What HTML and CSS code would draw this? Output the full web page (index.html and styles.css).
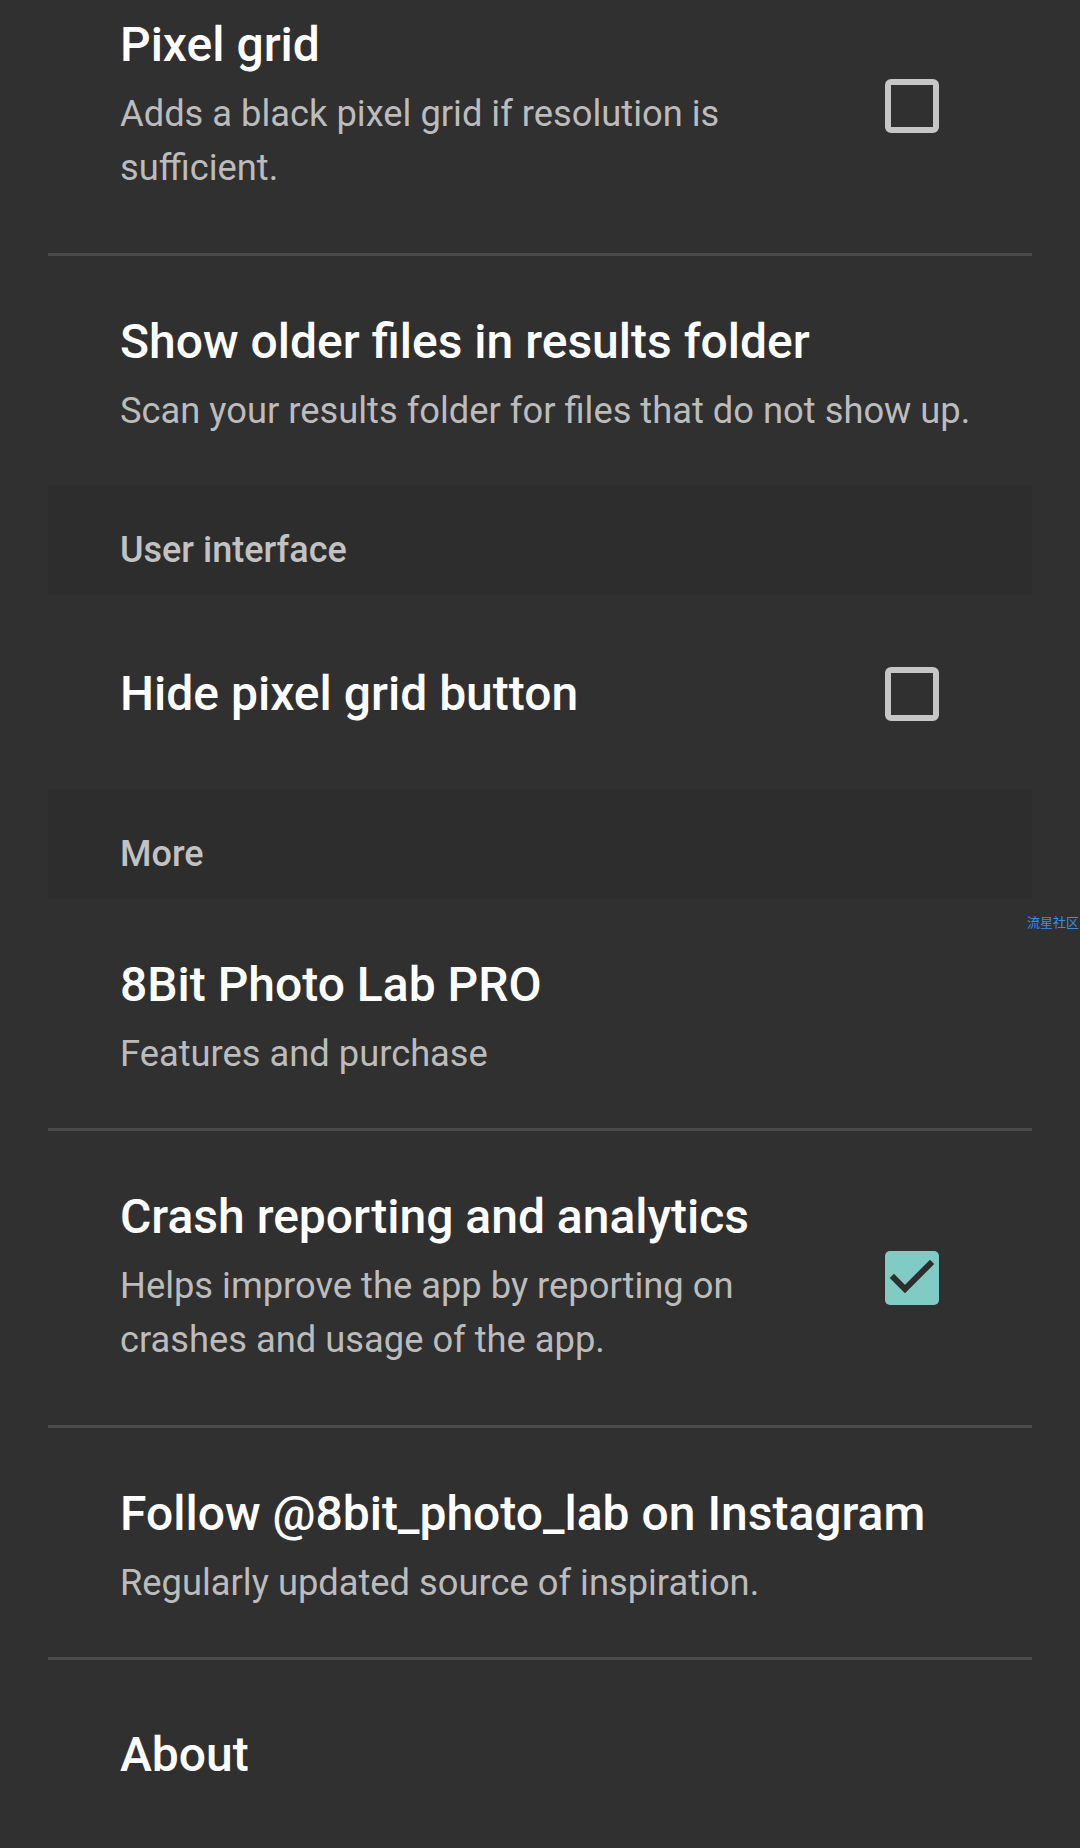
FILE: index.html
```html
<!DOCTYPE html>
<html>
<head>
	<meta charset="UTF-8">
	<title>Settings</title>
	<link rel="stylesheet" href="styles.css">
</head>
<body>
	<div class="settings">
		<!-- scrolled list, first row is partly off screen -->
		<div class="group">
			<div class="pref pref-tall">
				<div class="pref-text">
					<div class="pref-title">Pixel grid</div>
					<div class="pref-summary">Adds a black pixel grid if resolution is sufficient.</div>
				</div>
				<svg class="check" viewBox="0 0 54 54"><rect x="3" y="3" width="48" height="48" rx="3" class="box-off"/></svg>
			</div>
			<div class="pref">
				<div class="pref-text">
					<div class="pref-title">Show older files in results folder</div>
					<div class="pref-summary">Scan your results folder for files that do not show up.</div>
				</div>
			</div>
		</div>

		<div class="category">User interface</div>
		<div class="group">
			<div class="pref pref-single">
				<div class="pref-text">
					<div class="pref-title">Hide pixel grid button</div>
				</div>
				<svg class="check" viewBox="0 0 54 54"><rect x="3" y="3" width="48" height="48" rx="3" class="box-off"/></svg>
			</div>
		</div>

		<div class="category">More</div>
		<div class="group">
			<div class="pref">
				<div class="pref-text">
					<div class="pref-title">8Bit Photo Lab PRO</div>
					<div class="pref-summary">Features and purchase</div>
				</div>
			</div>
			<div class="pref pref-tall">
				<div class="pref-text">
					<div class="pref-title">Crash reporting and analytics</div>
					<div class="pref-summary">Helps improve the app by reporting on crashes and usage of the app.</div>
				</div>
				<svg class="check" viewBox="0 0 54 54"><rect x="0" y="0" width="54" height="54" rx="5" class="box-on"/><polyline points="9,27 20,38 45,13" class="tick"/></svg>
			</div>
			<div class="pref">
				<div class="pref-text">
					<div class="pref-title">Follow @8bit_photo_lab on Instagram</div>
					<div class="pref-summary">Regularly updated source of inspiration.</div>
				</div>
			</div>
			<div class="pref pref-single pref-last">
				<div class="pref-text">
					<div class="pref-title">About</div>
				</div>
			</div>
		</div>
	</div>
	<span class="watermark">流星社区</span>
</body>
</html>
```

FILE: styles.css
```css
html{background:#303030;}
body{margin:0;padding:0;background:#303030;font-family:Roboto,"Noto Sans","Noto Sans CJK SC",sans-serif;overflow:hidden;height:1848px;position:relative;}
.settings{margin:-41px 48px 0 48px;}
.pref{display:flex;align-items:center;padding:58px 0 47px 72px;}
.pref + .pref{border-top:3px solid #4a4a4a;}
.pref-tall{padding-bottom:58px;}
.pref-single{padding-top:71px;padding-bottom:67px;}
.pref-last{padding-top:67px;}
.pref-text{flex:1;min-width:0;}
.pref-title{font-size:48px;line-height:56px;font-weight:500;color:#fff;white-space:nowrap;}
.pref-summary{margin-top:14px;font-size:36.3px;line-height:54px;color:#bcbcbc;}
.check{flex:none;width:54px;height:54px;margin:0 93px 0 50px;}
.box-off{fill:none;stroke:#c6c6c6;stroke-width:6;}
.box-on{fill:#80cbc4;}
.tick{fill:none;stroke:#2e2e2e;stroke-width:6;stroke-linecap:square;}
.category{height:110px;box-sizing:border-box;padding:44px 0 0 72px;background:#2d2d2d;font-size:36px;line-height:42px;font-weight:500;color:#c2c2c2;}
.watermark{position:absolute;left:1027px;top:914px;font-size:13px;line-height:16px;color:#3a8ee0;font-family:"Noto Sans CJK SC",sans-serif;white-space:nowrap;}
```
